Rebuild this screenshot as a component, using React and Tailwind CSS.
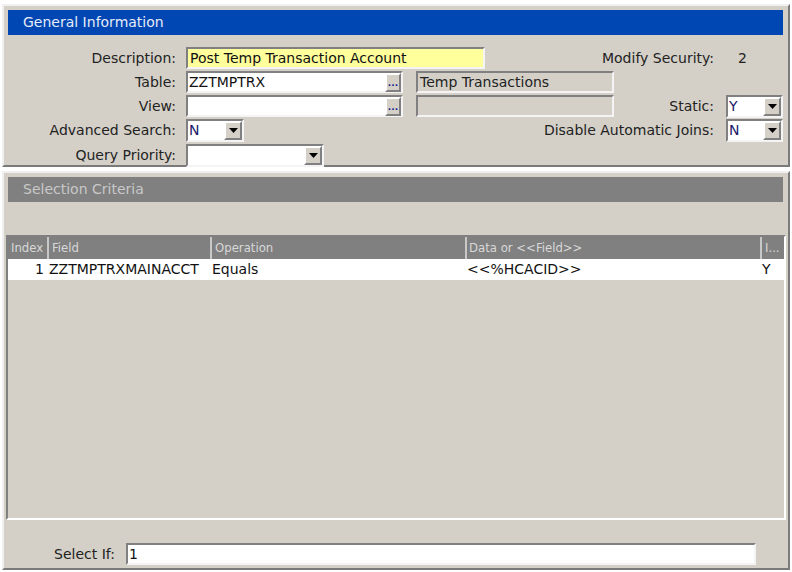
import React from 'react';

const FONT = { fontFamily: '"DejaVu Sans", Verdana, sans-serif' };
const NARROW = { fontFamily: '"Liberation Sans Narrow", "DejaVu Sans Condensed", "Liberation Sans", sans-serif' };

const Arrow = () => (
  <svg width="9" height="5" viewBox="0 0 9 5">
    <path d="M0 0h9L4.5 5z" fill="#000" />
  </svg>
);

const Sunken = ({ className = '', children }) => (
  <div className={`flex items-center border-2 border-t-[#808080] border-l-[#808080] border-b-[#f4f4f4] border-r-[#f4f4f4] ${className}`}>
    {children}
  </div>
);

const Raised = ({ className = '', children }) => (
  <div className={`flex items-center justify-center bg-[#d4d0c8] border-2 border-t-white border-l-white border-b-[#808080] border-r-[#808080] ${className}`}>
    {children}
  </div>
);

const Select = ({ value, width }) => (
  <Sunken className={`${width} h-[23px] bg-white`}>
    <span className="flex-1 pl-[1px] text-[14px] text-[#1a1a6a]">{value}</span>
    <Raised className="w-[18px] h-full">
      <Arrow />
    </Raised>
  </Sunken>
);

const Lookup = ({ value }) => (
  <Sunken className="w-[217px] h-[22px] bg-white">
    <span className="flex-1 pl-[1px] text-[14px] text-[#111]">{value}</span>
    <Raised className="w-[16px] h-[19px] items-end pb-[2px]">
      <span className="text-[9px] leading-none text-[#1a1a8a] font-bold">...</span>
    </Raised>
  </Sunken>
);

const Label = ({ children, w = 'w-[169px]' }) => (
  <div className={`${w} text-right text-[14px] text-[#222] pr-[1px]`}>{children}</div>
);

const Header = ({ title, blue }) => (
  <div className={`h-[25px] flex items-center pl-[15px] text-[14px] ${blue ? 'bg-[#0047b3] text-[#e6ecf8]' : 'bg-[#808080] text-[#c8c8c8]'}`}>
    {title}
  </div>
);

export default function App() {
  return (
    <div className="w-[792px] h-[572px] bg-white pt-[4px] px-[2px] overflow-hidden" style={FONT}>
      {/* General Information */}
      <div className="h-[163px] bg-[#d4d0c8] border-2 border-t-[#f0f0f0] border-l-[#f0f0f0] border-b-[#7a7a7a] border-r-[#7a7a7a] pt-[4px] pl-[4px] pr-[5px]">
        <Header title="General Information" blue />
        <div className="mt-[12px] flex flex-col gap-[2px]">
          <div className="flex items-center h-[22px]">
            <Label>Description:</Label>
            <Sunken className="ml-[9px] w-[299px] h-[22px] bg-[#ffff9c]">
              <span className="pl-[2px] text-[14px] text-[#111]">Post Temp Transaction Account</span>
            </Sunken>
            <div className="flex-1" />
            <div className="text-[14px] text-[#222]">Modify Security:</div>
            <div className="w-[69px] pl-[24px] text-[14px] text-[#222]">2</div>
          </div>
          <div className="flex items-center h-[22px]">
            <Label>Table:</Label>
            <div className="ml-[9px]"><Lookup value="ZZTMPTRX" /></div>
            <Sunken className="ml-[13px] w-[198px] h-[22px] bg-[#d4d0c8]">
              <span className="pl-[2px] text-[14px] text-[#222]">Temp Transactions</span>
            </Sunken>
          </div>
          <div className="flex items-center h-[22px]">
            <Label>View:</Label>
            <div className="ml-[9px]"><Lookup value="" /></div>
            <Sunken className="ml-[13px] w-[198px] h-[22px] bg-[#d4d0c8]" />
            <div className="flex-1" />
            <div className="text-[14px] text-[#222]">Static:</div>
            <div className="ml-[12px]"><Select value="Y" width="w-[57px]" /></div>
          </div>
          <div className="flex items-center h-[23px]">
            <Label>Advanced Search:</Label>
            <div className="ml-[9px]"><Select value="N" width="w-[58px]" /></div>
            <div className="flex-1" />
            <div className="text-[14px] text-[#222]">Disable Automatic Joins:</div>
            <div className="ml-[12px]"><Select value="N" width="w-[57px]" /></div>
          </div>
          <div className="flex items-center h-[23px]">
            <Label>Query Priority:</Label>
            <div className="ml-[9px]"><Select value="" width="w-[138px]" /></div>
          </div>
        </div>
      </div>

      {/* Selection Criteria */}
      <div className="mt-[4px] h-[399px] bg-[#d4d0c8] border-2 border-t-[#f0f0f0] border-l-[#f0f0f0] border-b-[#7a7a7a] border-r-[#7a7a7a] pt-[4px] pl-[4px] pr-[5px] flex flex-col">
        <Header title="Selection Criteria" />
        <div className="h-[33px]" />
        <div className="-ml-[2px] -mr-[3px] h-[285px] border-2 border-t-[#808080] border-l-[#808080] border-b-white border-r-white">
          <div className="flex h-[22px] bg-[#808080] text-[13px] text-[#d8d8d8]" style={NARROW}>
            <div className="w-[39px] pl-[3px] flex items-center">Index</div>
            <div className="w-[163px] pl-[3px] border-l-2 border-[#c8c8c8] flex items-center">Field</div>
            <div className="w-[255px] pl-[3px] border-l-2 border-[#c8c8c8] flex items-center">Operation</div>
            <div className="w-[295px] pl-[2px] border-l-2 border-[#c8c8c8] flex items-center">Data or &lt;&lt;Field&gt;&gt;</div>
            <div className="flex-1 pl-[3px] border-l-2 border-[#c8c8c8] flex items-center">I...</div>
          </div>
          <div className="flex h-[21px] bg-white text-[14px] text-[#111] items-center">
            <div className="w-[39px] pr-[3px] text-right">1</div>
            <div className="w-[163px] pl-[2px] whitespace-nowrap">ZZTMPTRXMAINACCT</div>
            <div className="w-[255px] pl-[2px]">Equals</div>
            <div className="w-[295px] pl-[2px]">&lt;&lt;%HCACID&gt;&gt;</div>
            <div className="flex-1 pl-[2px]">Y</div>
          </div>
        </div>
        <div className="flex items-center mt-[23px]">
          <div className="w-[107px] text-right text-[14px] text-[#222]">Select If:</div>
          <Sunken className="ml-[11px] w-[630px] h-[22px] bg-white">
            <span className="pl-[1px] text-[14px] text-[#111]">1</span>
          </Sunken>
        </div>
      </div>
    </div>
  );
}
